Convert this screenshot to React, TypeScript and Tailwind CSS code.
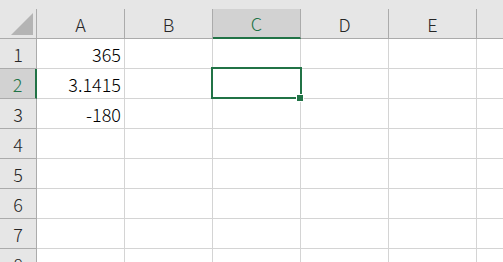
const columns = ['A', 'B', 'C', 'D', 'E', 'F'];
const rows = [1, 2, 3, 4, 5, 6, 7, 8];

const values: Record<number, Record<string, string>> = {
  1: { A: '365' },
  2: { A: '3.1415' },
  3: { A: '-180' },
};

const activeCol = 'C';
const activeRow = 2;

function ColumnHeader({ label }: { label: string }) {
  const active = label === activeCol;
  // the last column is cut by the window edge, its letter is out of view
  const shown = label === 'F' ? '' : label;
  return (
    <div className="flex flex-col w-[88px] shrink-0 h-full">
      <div className="h-[9px]" />
      <div
        className={
          active
            ? 'flex-1 flex items-center justify-center bg-[#d2d2d2] border-r border-[#ababab] border-b-2 border-b-[#217346] text-[#217346]'
            : 'flex-1 flex items-center justify-center border-r border-[#ababab] border-b border-b-[#ababab] text-[#262626]'
        }
      >
        {shown}
      </div>
    </div>
  );
}

function Row({ n }: { n: number }) {
  const active = n === activeRow;
  return (
    <div className="flex h-[30px]">
      <div
        className={
          active
            ? 'w-[37px] shrink-0 flex items-center justify-center bg-[#d2d2d2] border-b border-[#ababab] border-r-2 border-r-[#217346] text-[#217346]'
            : 'w-[37px] shrink-0 flex items-center justify-center bg-[#e6e6e6] border-b border-r border-[#ababab] text-[#262626]'
        }
      >
        {n}
      </div>
      {columns.map((c) => (
        <div
          key={c}
          className="w-[88px] shrink-0 flex items-center justify-end pr-[3px] border-r border-b border-[#d4d4d4] text-black"
        >
          {values[n]?.[c] ?? ''}
        </div>
      ))}
    </div>
  );
}

export default function App() {
  return (
    <div className="relative w-[503px] h-[262px] overflow-hidden bg-white font-['Noto_Sans_CJK_JP',sans-serif] font-light text-[18px] leading-none">
      {/* column headers */}
      <div className="flex h-[39px] bg-[#e6e6e6]">
        <div className="flex flex-col w-[37px] shrink-0 h-full">
          <div className="h-[9px]" />
          <div className="flex-1 flex items-end justify-end pr-[3px] pb-[3px] border-r border-b border-[#ababab]">
            <svg width="22" height="22" viewBox="0 0 22 22">
              <polygon points="0,22 22,0 22,22" fill="#b4b4b4" />
            </svg>
          </div>
        </div>
        {columns.map((c) => (
          <ColumnHeader key={c} label={c} />
        ))}
      </div>

      {rows.map((n) => (
        <Row key={n} n={n} />
      ))}

      {/* active cell selection */}
      <div className="absolute left-[211px] top-[67px] w-[91px] h-[32px] border-2 border-[#217346]" />
      <div className="absolute left-[296px] top-[94px] w-[8px] h-[8px] bg-[#217346] border border-white" />
    </div>
  );
}
